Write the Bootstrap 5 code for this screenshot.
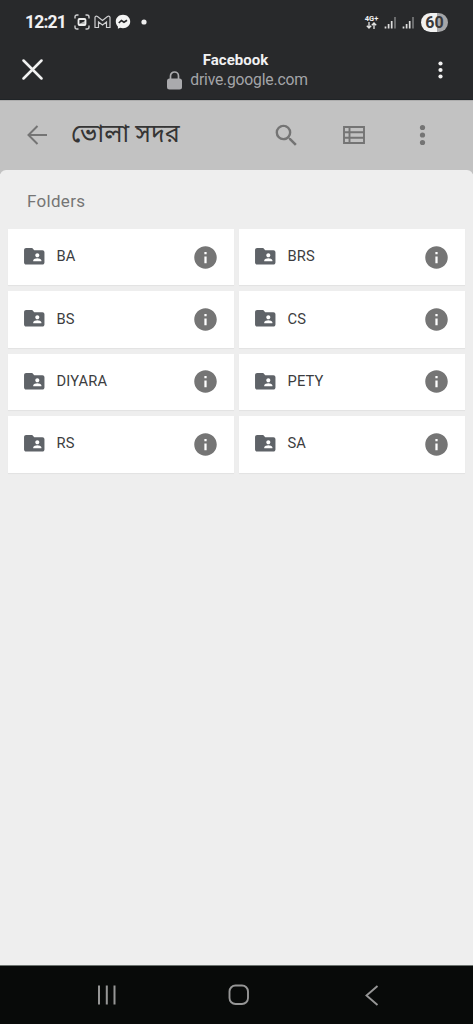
<!DOCTYPE html>
<html lang="bn">
<head>
<meta charset="utf-8">
<meta name="viewport" content="width=device-width, initial-scale=1">
<title>ভোলা সদর</title>
<link href="https://cdn.jsdelivr.net/npm/bootstrap@5.3.0/dist/css/bootstrap.min.css" rel="stylesheet">
<style>
body{font-family:Roboto,"Noto Sans Bengali","Noto Sans",sans-serif;background:#eee;overflow:hidden}
svg{display:block;flex:none}
.chrome{background:#28292b;color:#f1f1f3;height:100px;border-bottom:1px solid #202427}
.status{height:44px;padding:0 25px}
.clock{font-size:17.5px;font-weight:700;letter-spacing:-.8px;line-height:20px;width:49px}
.net{font-size:7.5px;font-weight:700;line-height:7px;width:15px}
.battery{width:27px;height:19px;border-radius:10px;background:linear-gradient(90deg,#f1f1f1 60%,#a6a6a8 60%);color:#39393b;font-size:16px;font-weight:700;line-height:19px}
.titlebar{height:55px;padding:0 24px 0 22px}
.page-name{font-size:15px;font-weight:700;line-height:20px}
.host{font-size:15.7px;letter-spacing:-.2px;line-height:20px;color:#a3a4a8}
.toolbar{height:74px;background:#c2c2c2;color:#747474;border-top:1px solid #adadad;padding:0 37px 5px 26px}
.folder-title{font-size:25px;line-height:34px;color:#353535;padding-bottom:2px}
.sheet{background:#eee;border-radius:6px 6px 0 0;margin-top:-4px}
.section-name{font-size:17px;letter-spacing:.3px;line-height:24px;color:#757575;padding:19px 27px 16px}
.folders{display:grid;grid-template-columns:1fr 1fr;grid-auto-rows:56.4px;gap:6px 5px;padding:0 8px}
.folder{background:#fff;color:#3c3d40;font-size:14.7px;letter-spacing:.15px;padding:0 15px 0 14px;box-shadow:0 1px 1px #e3e3e3}
.folder>svg:first-child{margin-bottom:2px}
.folder-label{margin-left:10px;line-height:20px;padding-bottom:2px}
.navkeys{height:59px;background:#080a09;border-top:1px solid #6c736f}
</style>
</head>
<body>
<svg width="0" height="0" class="position-absolute">
  <symbol id="shared" viewBox="0 0 24 24"><path fill="#5f6368" d="M20 6h-8l-2-2H4c-1.1 0-2 .9-2 2v12c0 1.1.9 2 2 2h16c1.1 0 2-.9 2-2V8c0-1.1-.9-2-2-2zm-5 3c1.1 0 2 .9 2 2s-.9 2-2 2-2-.9-2-2 .9-2 2-2zm4 8h-8v-1c0-1.33 2.67-2 4-2s4 .67 4 2v1z"/></symbol>
  <symbol id="info" viewBox="0 0 24 24"><path fill="#757575" d="M12 2C6.48 2 2 6.48 2 12s4.480 10 10 10 10-4.480 10-10S17.520 2 12 2zm1 15h-2v-6h2v6zm0-8h-2V7h2v2z"/></symbol>
  <symbol id="signal" viewBox="0 0 13 13"><path d="M1.500 10.500v2M4.600 8v4.500M7.700 5v7.500" stroke="#ddd" stroke-width="1.700"/><path d="M11 1v11.500" stroke="#77787a" stroke-width="1.700"/></symbol>
</svg>
<div class="vh-100 d-flex flex-column">
  <header class="chrome flex-shrink-0">
    <div class="status d-flex align-items-center">
      <span class="clock">12:21</span>
      <svg width="16" height="16" viewBox="0 0 16 16" fill="none" stroke="#d0d0d2" stroke-width="1.400"><path d="M1 4.500V3q0-2 2-2h1.500M11.500 1H13q2 0 2 2v1.500M15 11.500V13q0 2-2 2h-1.500M4.500 15H3q-2 0-2-2v-1.500"/><rect x="4.500" y="5" width="7" height="6" rx="1" stroke="#eee" stroke-width="1.800"/><path d="M5 10l6-3v4H5z" fill="#eee" stroke="none" opacity=".7"/></svg>
      <svg class="ms-1" width="17" height="14" viewBox="0 0 17 14" fill="none" stroke="#d0d0d2" stroke-width="1.200"><path d="M1 12.500V2.500Q1.500.500 3.500 1.500L8.500 5.500l5-4Q15.500.500 16 2.500v10h-3.500V7l-4 3-4-3v5.500z"/></svg>
      <svg style="margin-left:4px" width="16" height="16" viewBox="0 0 16 16"><path d="M8 .800C3.800.800.800 3.700.800 7.500c0 2 .800 3.700 2.100 5v2.300l2.200-1c.900.300 1.900.400 2.900.400 4.200 0 7.200-2.900 7.200-6.700S12.200.800 8 .800z" fill="#f4f4f4"/><path d="M3.800 9l2.600-2.500L9 8.300l3-2" fill="none" stroke="#29292b" stroke-width="1.700"/></svg>
      <svg style="margin-left:10px" width="6" height="6"><circle cx="3" cy="3" r="2.600" fill="#eee"/></svg>
      <div class="net ms-auto text-center">4G+
        <svg class="mx-auto" width="11" height="7" viewBox="0 0 11 7" fill="none" stroke="#e5e5e5" stroke-width="1.300"><path d="M3 0v6M.800 3.700L3 6l2.200-2.300M8 7V1M5.800 3.300L8 1l2.200 2.300"/></svg></div>
      <svg style="margin-left:5px" width="13" height="13"><use href="#signal"/></svg>
      <svg style="margin-left:5px" width="13" height="13"><use href="#signal"/></svg>
      <span class="battery text-center" style="margin-left:6px">60</span>
    </div>
    <div class="titlebar d-flex justify-content-between">
      <svg style="margin-top:15px" width="21" height="21" viewBox="0 0 21 21"><path d="M1.500 1.500l18 18M19.500 1.500l-18 18" stroke="#f1f1f1" stroke-width="2.500" stroke-linecap="round"/></svg>
      <div class="text-center" style="padding-top:6px">
        <div class="page-name pe-1">Facebook</div>
        <div class="host d-flex align-items-center"><svg style="margin-right:8px" width="15" height="19" viewBox="0 0 15 19"><rect y="7.500" width="15" height="11" rx="2.500" fill="#aaaaad"/><path d="M3.500 8V5a4 4 0 0 1 8 0v3" fill="none" stroke="#aaaaad" stroke-width="1.700"/></svg>drive.google.com</div>
      </div>
      <svg style="margin-top:17px" width="17" height="18" fill="#f1f1f1"><circle cx="8.500" cy="2.500" r="2.100"/><circle cx="8.500" cy="9" r="2.100"/><circle cx="8.500" cy="15.500" r="2.100"/></svg>
    </div>
  </header>
  <div class="toolbar d-flex align-items-center flex-shrink-0">
    <svg width="22" height="22" viewBox="0 0 22 22" fill="none" stroke="#747474" stroke-width="2"><path d="M21 11H3M11.500 2L2.500 11l9 9"/></svg>
    <span class="folder-title" style="margin-left:23px">ভোলা সদর</span>
    <svg class="ms-auto" width="29" height="29" viewBox="0 0 24 24" fill="currentColor"><path d="M15.500 14h-.79l-.28-.27A6.470 6.470 0 0 0 16 9.500 6.500 6.500 0 1 0 9.500 16c1.610 0 3.090-.59 4.230-1.570l.27.28v.79l5 4.990L20.490 19l-4.990-5zm-6 0C7.010 14 5 11.990 5 9.500S7.010 5 9.500 5 14 7.010 14 9.500 11.990 14 9.500 14z"/></svg>
    <svg style="margin-left:42px" width="22" height="18" viewBox="0 0 22 18" fill="none" stroke="#747474" stroke-width="1.900"><path d="M1 1h20v16H1zM6.500 1v16M1 6.300h20M1 11.700h20"/></svg>
    <svg style="margin-left:44px" width="27" height="22" fill="#747474"><circle cx="13.500" cy="3.500" r="2.600"/><circle cx="13.500" cy="11" r="2.600"/><circle cx="13.500" cy="18.500" r="2.600"/></svg>
  </div>
  <main class="sheet flex-grow-1">
    <h1 class="section-name m-0 fw-normal">Folders</h1>
    <div class="folders">
      <div class="folder d-flex align-items-center"><svg width="24.500" height="24.500"><use href="#shared"/></svg><span class="folder-label">BA</span><svg class="ms-auto" width="27" height="27"><use href="#info"/></svg></div>
      <div class="folder d-flex align-items-center"><svg width="24.500" height="24.500"><use href="#shared"/></svg><span class="folder-label">BRS</span><svg class="ms-auto" width="27" height="27"><use href="#info"/></svg></div>
      <div class="folder d-flex align-items-center"><svg width="24.500" height="24.500"><use href="#shared"/></svg><span class="folder-label">BS</span><svg class="ms-auto" width="27" height="27"><use href="#info"/></svg></div>
      <div class="folder d-flex align-items-center"><svg width="24.500" height="24.500"><use href="#shared"/></svg><span class="folder-label">CS</span><svg class="ms-auto" width="27" height="27"><use href="#info"/></svg></div>
      <div class="folder d-flex align-items-center"><svg width="24.500" height="24.500"><use href="#shared"/></svg><span class="folder-label">DIYARA</span><svg class="ms-auto" width="27" height="27"><use href="#info"/></svg></div>
      <div class="folder d-flex align-items-center"><svg width="24.500" height="24.500"><use href="#shared"/></svg><span class="folder-label">PETY</span><svg class="ms-auto" width="27" height="27"><use href="#info"/></svg></div>
      <div class="folder d-flex align-items-center"><svg width="24.500" height="24.500"><use href="#shared"/></svg><span class="folder-label">RS</span><svg class="ms-auto" width="27" height="27"><use href="#info"/></svg></div>
      <div class="folder d-flex align-items-center"><svg width="24.500" height="24.500"><use href="#shared"/></svg><span class="folder-label">SA</span><svg class="ms-auto" width="27" height="27"><use href="#info"/></svg></div>
    </div>
  </main>
  <nav class="navkeys d-flex align-items-center flex-shrink-0">
    <svg style="margin-left:96px" width="21" height="20" stroke="#969696" stroke-width="2"><path d="M3 .500v19M10.800 .500v19M18.500 .500v19"/></svg>
    <svg style="margin-left:111px" width="22" height="22"><rect x="1.500" y="1.500" width="18.500" height="18.500" rx="6" fill="none" stroke="#969696" stroke-width="1.900"/></svg>
    <svg style="margin-left:114px" width="15" height="21" fill="none" stroke="#969696" stroke-width="1.900"><path d="M13.500 1L2.500 10.500l11 9.500"/></svg>
  </nav>
</div>
<script src="https://cdn.jsdelivr.net/npm/bootstrap@5.3.0/dist/js/bootstrap.bundle.min.js"></script>
</body>
</html>
